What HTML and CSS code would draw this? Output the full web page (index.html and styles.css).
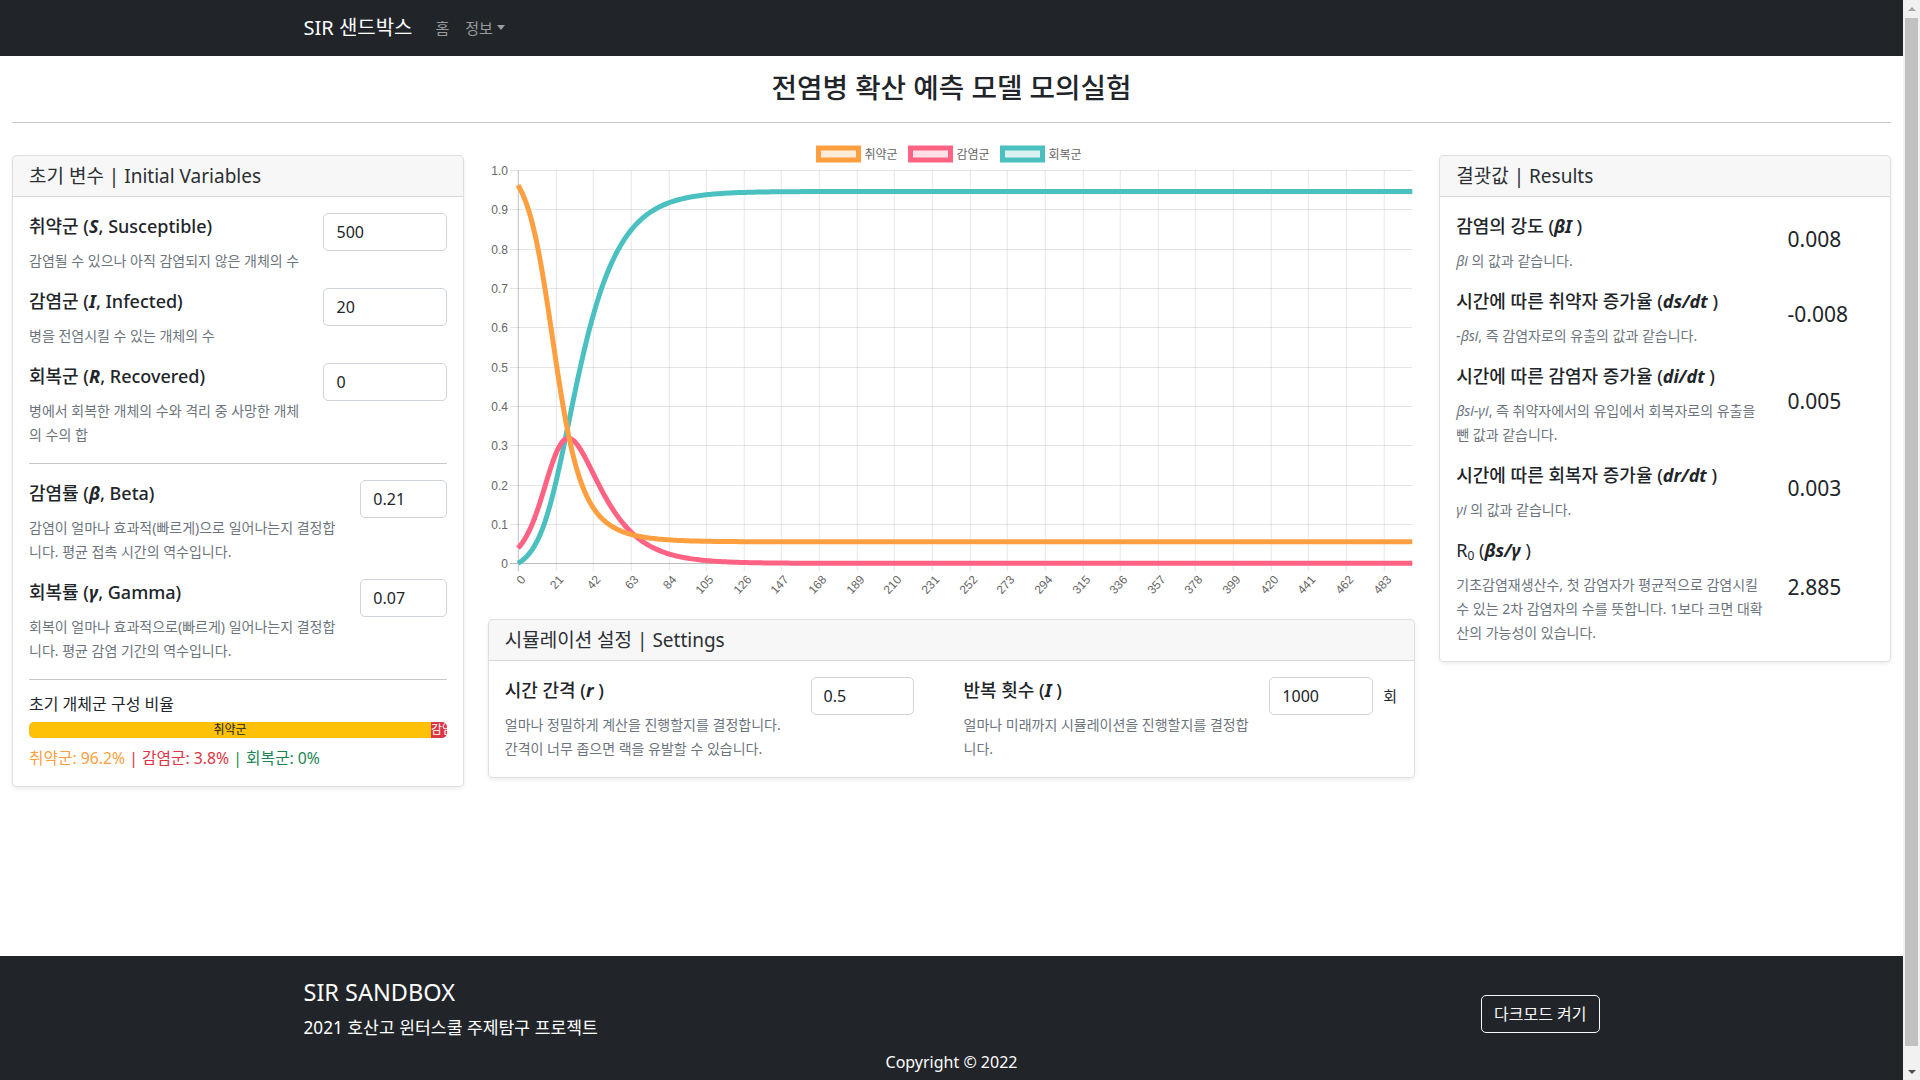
FILE: index.html
```html
<!DOCTYPE html>
<html lang="ko">
<head>
<meta charset="utf-8">
<title>SIR 샌드박스</title>
<link rel="stylesheet" href="styles.css">
</head>
<body>
<nav class="navbar">
  <div class="container nav-inner">
    <a class="brand">SIR 샌드박스</a>
    <a class="nav-link">홈</a>
    <a class="nav-link dropdown">정보</a>
  </div>
</nav>

<main class="main">
  <h3 class="page-title">전염병 확산 예측 모델 모의실험</h3>
  <hr class="divider">

  <div class="row layout">
    <div class="col-3">
      <div class="card">
        <div class="card-header">초기 변수 | Initial Variables</div>
        <div class="card-body">
          <div class="row item">
            <div class="col-8">
              <div class="label">취약군 (<i>S</i>, Susceptible)</div>
              <div class="desc">감염될 수 있으나 아직 감염되지 않은 개체의 수</div>
            </div>
            <div class="col-4"><input class="form-control" type="text" value="500"></div>
          </div>
          <div class="row item">
            <div class="col-8">
              <div class="label">감염군 (<i>I</i>, Infected)</div>
              <div class="desc">병을 전염시킬 수 있는 개체의 수</div>
            </div>
            <div class="col-4"><input class="form-control" type="text" value="20"></div>
          </div>
          <div class="row item">
            <div class="col-8">
              <div class="label">회복군 (<i>R</i>, Recovered)</div>
              <div class="desc">병에서 회복한 개체의 수와 격리 중 사망한 개체<br>의 수의 합</div>
            </div>
            <div class="col-4"><input class="form-control" type="text" value="0"></div>
          </div>
          <hr class="sep">
          <div class="row item">
            <div class="col-9">
              <div class="label">감염률 (<i>β</i>, Beta)</div>
              <div class="desc">감염이 얼마나 효과적(빠르게)으로 일어나는지 결정합<br>니다. 평균 접촉 시간의 역수입니다.</div>
            </div>
            <div class="col-3"><input class="form-control" type="text" value="0.21"></div>
          </div>
          <div class="row item">
            <div class="col-9">
              <div class="label">회복률 (<i>γ</i>, Gamma)</div>
              <div class="desc">회복이 얼마나 효과적으로(빠르게) 일어나는지 결정합<br>니다. 평균 감염 기간의 역수입니다.</div>
            </div>
            <div class="col-3"><input class="form-control" type="text" value="0.07"></div>
          </div>
          <hr class="sep">
          <div class="ratio-title">초기 개체군 구성 비율</div>
          <div class="progress">
            <div class="bar bar-s" style="width: 96.2%">취약군</div>
            <div class="bar bar-i" style="width: 3.8%">감염군</div>
            <div class="bar bar-r" style="width: 0%">회복군</div>
          </div>
          <div class="ratio-text"><span class="c-s">취약군: 96.2%</span><span class="c-i"> | 감염군: 3.8%</span><span class="c-r"> | 회복군: 0%</span></div>
        </div>
      </div>
    </div>

    <div class="col-6">
      <div class="chart-wrap">
        <svg id="chart" width="100%" height="464"></svg>
      </div>
      <div class="card settings">
        <div class="card-header">시뮬레이션 설정 | Settings</div>
        <div class="card-body">
          <div class="row">
            <div class="col-6">
              <div class="row">
                <div class="col-8">
                  <div class="label">시간 간격 (<i>r</i> )</div>
                  <div class="desc">얼마나 정밀하게 계산을 진행할지를 결정합니다.<br>간격이 너무 좁으면 랙을 유발할 수 있습니다.</div>
                </div>
                <div class="col-4">
                  <div class="input-group"><input class="form-control" type="text" value="0.5"><span class="unit"></span></div>
                </div>
              </div>
            </div>
            <div class="col-6">
              <div class="row">
                <div class="col-8">
                  <div class="label">반복 횟수 (<i>I</i> )</div>
                  <div class="desc">얼마나 미래까지 시뮬레이션을 진행할지를 결정합<br>니다.</div>
                </div>
                <div class="col-4">
                  <div class="input-group"><input class="form-control" type="text" value="1000"><span class="unit">회</span></div>
                </div>
              </div>
            </div>
          </div>
        </div>
      </div>
    </div>

    <div class="col-3">
      <div class="card">
        <div class="card-header">결괏값 | Results</div>
        <div class="card-body">
          <div class="row item result">
            <div class="col-9">
              <div class="label">감염의 강도 (<i>βI</i> )</div>
              <div class="desc"><i>βi</i> 의 값과 같습니다.</div>
            </div>
            <div class="col-3"><div class="value">0.008</div></div>
          </div>
          <div class="row item result">
            <div class="col-9">
              <div class="label">시간에 따른 취약자 증가율 (<i>ds/dt</i> )</div>
              <div class="desc"><i>-βsi</i>, 즉 감염자로의 유출의 값과 같습니다.</div>
            </div>
            <div class="col-3"><div class="value">-0.008</div></div>
          </div>
          <div class="row item result">
            <div class="col-9">
              <div class="label">시간에 따른 감염자 증가율 (<i>di/dt</i> )</div>
              <div class="desc"><i>βsi-γi</i>, 즉 취약자에서의 유입에서 회복자로의 유출을<br>뺀 값과 같습니다.</div>
            </div>
            <div class="col-3"><div class="value">0.005</div></div>
          </div>
          <div class="row item result">
            <div class="col-9">
              <div class="label">시간에 따른 회복자 증가율 (<i>dr/dt</i> )</div>
              <div class="desc"><i>γi</i> 의 값과 같습니다.</div>
            </div>
            <div class="col-3"><div class="value">0.003</div></div>
          </div>
          <div class="row item result last">
            <div class="col-9">
              <div class="label r0">R<sub>0</sub> (<i>βs/γ</i> )</div>
              <div class="desc">기초감염재생산수, 첫 감염자가 평균적으로 감염시킬<br>수 있는 2차 감염자의 수를 뜻합니다. 1보다 크면 대확<br>산의 가능성이 있습니다.</div>
            </div>
            <div class="col-3"><div class="value">2.885</div></div>
          </div>
        </div>
      </div>
    </div>
  </div>
</main>

<footer class="footer">
  <div class="container">
    <div class="footer-row">
      <div>
        <h4 class="footer-title">SIR SANDBOX</h4>
        <p class="footer-sub">2021 호산고 윈터스쿨 주제탐구 프로젝트</p>
      </div>
      <button class="btn-outline" type="button">다크모드 켜기</button>
    </div>
  </div>
  <div class="copyright">Copyright © 2022</div>
</footer>

<div class="fake-scrollbar" aria-hidden="true">
  <span class="sb-btn sb-up"></span>
  <span class="sb-thumb"></span>
  <span class="sb-btn sb-down"></span>
</div>

<script src="script.js"></script>
</body>
</html>
```

FILE: styles.css
```css
* { box-sizing: border-box; }

body {
  margin: 0 17px 0 0;
  font-family: "Noto Sans", "Noto Sans CJK KR", sans-serif;
  font-size: 16px;
  line-height: 1.5;
  color: #212529;
  background: #fff;
}

/* scrollbar look-alike (overlay on the right edge) */
.fake-scrollbar {
  position: fixed;
  top: 0;
  right: 0;
  width: 17px;
  height: 100vh;
  background: #f1f1f1;
  display: flex;
  flex-direction: column;
}
.sb-btn {
  flex: 0 0 17px;
  display: flex;
  align-items: center;
  justify-content: center;
}
.sb-btn::before {
  content: "";
  border-left: 4px solid transparent;
  border-right: 4px solid transparent;
}
.sb-up::before { border-bottom: 4px solid #a3a3a3; }
.sb-down::before { border-top: 4px solid #505050; }
.sb-thumb {
  flex: 1 1 auto;
  margin: 1px 2px 17px;
  background: #c1c1c1;
}

.container {
  max-width: 1320px;
  margin: 0 auto;
  padding: 0 12px;
}

/* navbar */
.navbar { background: #212529; }
.nav-inner {
  display: flex;
  align-items: center;
  height: 56px;
}
.brand {
  color: #fff;
  font-size: 20px;
  line-height: 28px;
  margin-right: 15px;
}
.nav-link {
  color: rgba(255, 255, 255, .55);
  font-size: 15px;
  padding: 0 8px;
}
.dropdown::after {
  content: "";
  display: inline-block;
  margin-left: 4px;
  vertical-align: 4px;
  border-top: 5px solid;
  border-left: 4px solid transparent;
  border-right: 4px solid transparent;
}

/* main */
.main { padding: 0 12px; }
.page-title {
  margin: 14px 0 0;
  font-size: 27.7px;
  line-height: 34px;
  font-weight: 500;
  text-align: center;
}
.divider {
  margin: 18px 0 0;
  height: 0;
  border: 0;
  border-top: 1px solid rgba(33, 37, 41, .25);
}

/* grid */
.row {
  display: flex;
  margin-left: -12px;
  margin-right: -12px;
}
.col-3, .col-4, .col-6, .col-8, .col-9 {
  padding-left: 12px;
  padding-right: 12px;
  min-width: 0;
}
.col-3 { flex: 0 0 25%; }
.col-4 { flex: 0 0 33.333333%; }
.col-6 { flex: 0 0 50%; }
.col-8 { flex: 0 0 66.666667%; }
.col-9 { flex: 0 0 75%; }

.layout { margin-top: 16px; align-items: flex-start; }
.layout > .col-3 > .card { margin-top: 16px; }

/* card */
.card {
  background: #fff;
  border: 1px solid rgba(0, 0, 0, .125);
  border-radius: 5px;
  box-shadow: 0 2px 4px rgba(0, 0, 0, .075);
}
.card-header {
  background: rgba(0, 0, 0, .03);
  border-bottom: 1px solid rgba(0, 0, 0, .125);
  border-radius: 4px 4px 0 0;
  padding: 8px 16px;
  font-size: 19px;
  line-height: 24px;
  color: #2b2f33;
}
.card-body { padding: 16px; }

.item { margin-bottom: 15px; }
.item.last { margin-bottom: 0; }

.label {
  font-size: 18px;
  line-height: 26px;
  font-weight: 500;
  margin-bottom: 10px;
  white-space: nowrap;
}
.label i { font-weight: 700; }
.label sub {
  font-size: 12px;
  line-height: 0;
  vertical-align: -3px;
  font-weight: 400;
}
.r0 { font-weight: 400; }
.r0 i { font-weight: 700; }

.desc {
  font-size: 14px;
  line-height: 24px;
  color: #6c757d;
  white-space: nowrap;
}

.form-control {
  display: block;
  width: 100%;
  height: 38px;
  padding: 6px 12px;
  font-family: inherit;
  font-size: 16px;
  line-height: 24px;
  color: #212529;
  background: #fff;
  border: 1px solid #ced4da;
  border-radius: 5px;
}

.sep {
  margin: 16px 0;
  height: 0;
  border: 0;
  border-top: 1px solid rgba(33, 37, 41, .25);
}

.ratio-title {
  font-size: 16px;
  line-height: 18px;
  margin-top: -1px;
  margin-bottom: 9px;
}
.progress {
  display: flex;
  height: 16px;
  background: #e9ecef;
  border-radius: 5px;
  overflow: hidden;
  font-size: 12px;
  line-height: 16px;
  margin-bottom: 8px;
}
.bar {
  display: flex;
  flex-direction: column;
  justify-content: center;
  overflow: hidden;
  white-space: nowrap;
  text-align: center;
}
.bar-s { background: #ffc107; color: #212529; }
.bar-i { background: #dc3545; color: #fff; }
.bar-r { background: #198754; color: #fff; }

.ratio-text {
  font-size: 15.75px;
  line-height: 24px;
}
.c-s { color: #ff9f40; }
.c-i { color: #dc3545; }
.c-r { color: #198754; }

/* results */
.result { align-items: center; }
.value {
  font-size: 21px;
  line-height: 25px;
  margin-bottom: 8px;
}

/* chart + settings */
.chart-wrap { height: 464px; }
#chart { display: block; }
.tick {
  font-family: "Liberation Sans", "Noto Sans CJK KR", sans-serif;
  font-size: 12px;
  fill: #666;
}
.settings { margin-top: 16px; }
.input-group { display: flex; align-items: center; }
.input-group .form-control { flex: 1 1 auto; width: 1%; }
.unit {
  flex: 0 0 25px;
  padding-left: 10px;
  font-size: 15px;
  line-height: 24px;
}

/* footer */
.footer {
  margin-top: 169px;
  background: #212529;
  color: #fff;
  padding-top: 22px;
  padding-bottom: 16px;
}
.footer-row {
  display: flex;
  align-items: center;
  justify-content: space-between;
}
.footer-title {
  margin: 0 0 9px;
  font-size: 23.5px;
  line-height: 29px;
  font-weight: 400;
}
.footer-sub {
  margin: 0 0 10px;
  font-size: 17.2px;
  line-height: 24px;
}
.btn-outline {
  font-family: inherit;
  font-size: 16px;
  line-height: 24px;
  padding: 6px 12px;
  color: #f8f9fa;
  background: transparent;
  border: 1px solid #f8f9fa;
  border-radius: 5px;
}
.copyright {
  text-align: center;
  font-size: 16px;
  line-height: 24px;
}
```

FILE: script.js
```js
(function () {
  var svg = document.getElementById('chart');
  var NS = 'http://www.w3.org/2000/svg';
  var L = 30, R = 924.3, T = 31, B = 424.3;
  var N = 500;
  var step = (R - L) / (N - 1);

  function el(tag, attrs, text) {
    var e = document.createElementNS(NS, tag);
    for (var k in attrs) e.setAttribute(k, attrs[k]);
    if (text != null) e.textContent = text;
    svg.appendChild(e);
    return e;
  }

  // horizontal grid + y labels
  for (var k = 0; k <= 10; k++) {
    var y = Math.round(B - k * (B - T) / 10) + 0.5;
    el('line', { x1: 22, x2: R, y1: y, y2: y,
      stroke: k === 0 ? 'rgba(0,0,0,0.25)' : 'rgba(0,0,0,0.1)', 'stroke-width': 1 });
    var lbl = k === 10 ? '1.0' : (k === 0 ? '0' : (k / 10).toFixed(1));
    el('text', { x: 20, y: y, 'text-anchor': 'end', 'dominant-baseline': 'central', 'class': 'tick' }, lbl);
  }

  // vertical grid + x labels
  for (var i = 0; i < N; i += 21) {
    var x = Math.round(L + i * step) + 0.25;
    el('line', { x1: x, x2: x, y1: T, y2: B + 8,
      stroke: i === 0 ? 'rgba(0,0,0,0.25)' : 'rgba(0,0,0,0.1)', 'stroke-width': 1 });
    el('text', { x: 0, y: 0, transform: 'translate(' + (x + 5) + ',' + (B + 14) + ') rotate(-48)',
      'text-anchor': 'end', 'dominant-baseline': 'central', 'class': 'tick' }, String(i));
  }

  // SIR simulation (Euler, dt = 0.5, 1000 iterations)
  var s = 500 / 520, inf = 20 / 520, r = 0;
  var beta = 0.21, gamma = 0.07, dt = 0.5;
  var S = [], I = [], Rc = [];
  for (var n = 0; n < 1000; n++) {
    if (n % 2 === 0) { S.push(s); I.push(inf); Rc.push(r); }
    var ds = -beta * s * inf, di = beta * s * inf - gamma * inf, dr = gamma * inf;
    s += ds * dt; inf += di * dt; r += dr * dt;
  }

  function line(data, color) {
    var pts = [];
    for (var j = 0; j < data.length; j++) {
      pts.push((L + j * step).toFixed(2) + ',' + (B - data[j] * (B - T)).toFixed(2));
    }
    el('polyline', { points: pts.join(' '), fill: 'none', stroke: color,
      'stroke-width': 5, 'stroke-linejoin': 'round' });
  }
  line(Rc, 'rgb(75,192,192)');
  line(I, 'rgb(255,99,132)');
  line(S, 'rgb(255,159,64)');

  // legend
  var items = [
    { x: 330.5, label: '취약군', stroke: 'rgb(255,159,64)', fill: 'rgba(255,159,64,0.2)' },
    { x: 422.5, label: '감염군', stroke: 'rgb(255,99,132)', fill: 'rgba(255,99,132,0.2)' },
    { x: 514.5, label: '회복군', stroke: 'rgb(75,192,192)', fill: 'rgba(75,192,192,0.2)' }
  ];
  items.forEach(function (it) {
    el('rect', { x: it.x, y: 9, width: 40, height: 12, fill: it.fill, stroke: it.stroke, 'stroke-width': 5 });
    el('text', { x: it.x + 46, y: 15.5, 'dominant-baseline': 'central', 'class': 'tick' }, it.label);
  });
})();
```
